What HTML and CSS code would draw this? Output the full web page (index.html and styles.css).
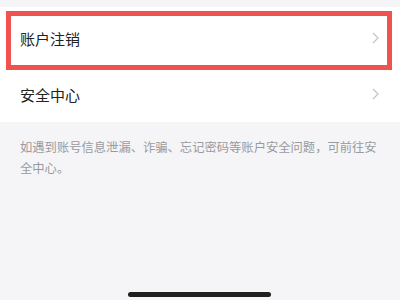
FILE: index.html
```html
<!DOCTYPE html>
<html lang="zh">
<head>
<meta charset="utf-8">
<link rel="stylesheet" href="styles.css">
</head>
<body>
<div class="page">
  <div class="group">
    <div class="row highlighted">
      <span class="label">账户注销</span>
      <svg class="chev" width="7" height="12" viewBox="0 0 7 12"><path d="M1 1 L6 6 L1 11" fill="none" stroke="#c4c4c8" stroke-width="1.2"/></svg>
      <div class="mark"></div>
    </div>
    <div class="row">
      <span class="label">安全中心</span>
      <svg class="chev" width="7" height="12" viewBox="0 0 7 12"><path d="M1 1 L6 6 L1 11" fill="none" stroke="#c4c4c8" stroke-width="1.2"/></svg>
    </div>
  </div>
  <p class="hint">如遇到账号信息泄漏、诈骗、忘记密码等账户安全问题，可前往安全中心。</p>
  <div class="home"></div>
</div>
</body>
</html>
```
FILE: styles.css
```css
html, body {
  margin: 0;
  padding: 0;
  background: #f5f5f7;
}
.page {
  width: 400px;
  height: 300px;
  position: relative;
  font-family: "Noto Sans CJK SC", "Noto Sans", sans-serif;
  padding-top: 7px;
  box-sizing: border-box;
}
.group {
  background: #fff;
  padding-top: 3px;
}
.row {
  position: relative;
  height: 56px;
  display: flex;
  align-items: center;
  justify-content: space-between;
  padding: 0 21px 0 20px;
}
.label {
  font-size: 15px;
  color: #222;
}
.chev {
  display: block;
}
.mark {
  position: absolute;
  left: 6px;
  top: 1px;
  width: 386px;
  height: 59px;
  box-sizing: border-box;
  border: 5px solid #f0524f;
}
.hint {
  margin: 0;
  padding: 15px 20px 0 20px;
  font-size: 12.3px;
  line-height: 21px;
  color: #9a9a9e;
}
.home {
  position: absolute;
  left: 128px;
  bottom: 3px;
  width: 143px;
  height: 5px;
  border-radius: 3px;
  background: #1f1f1f;
}
```
